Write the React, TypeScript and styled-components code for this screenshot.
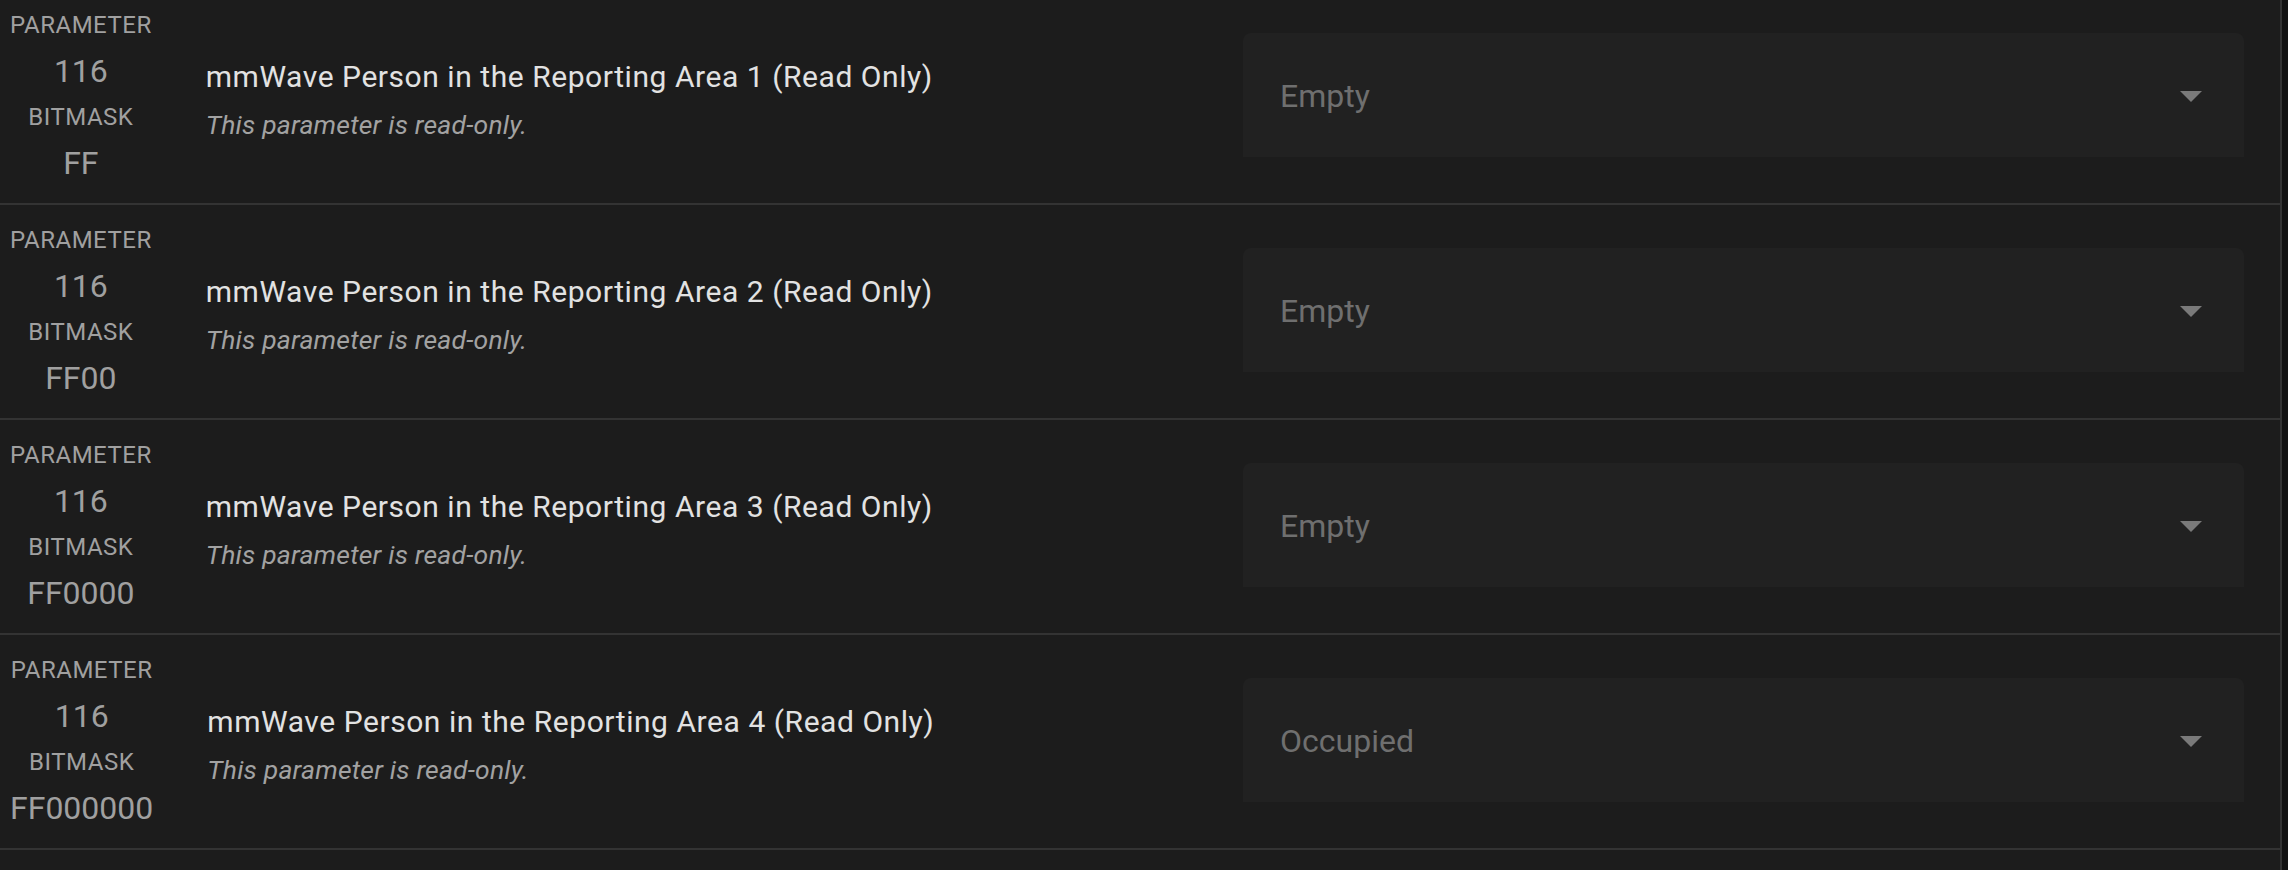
import React from "react";
import styled, { createGlobalStyle } from "styled-components";

const GlobalStyle = createGlobalStyle`
  html, body {
    margin: 0;
    padding: 0;
    background: #121212;
  }
  body {
    font-family: Roboto, "Liberation Sans", Arial, sans-serif;
    overflow: hidden;
  }
`;

const Viewport = styled.div`
  height: 870px;
  overflow: hidden;
`;

const Panel = styled.div`
  box-sizing: border-box;
  width: 2282px;
  min-height: 900px;
  margin-top: -10px;
  background: #1c1c1c;
  border-right: 2px solid #333333;
`;

const Row = styled.div`
  display: flex;
  align-items: center;
  min-height: 213px;
  border-bottom: 2px solid #333333;
`;

const IdColumn = styled.div`
  display: flex;
  flex-direction: column;
  align-items: center;
  padding-left: 10px;
  color: #a0a0a0;
  text-align: center;
`;

const Caption = styled.div`
  font-size: 24px;
  line-height: 40px;
  text-transform: uppercase;
  letter-spacing: 0.5px;
`;

const Value = styled.div`
  font-size: 32px;
  line-height: 52px;
`;

const Info = styled.div`
  flex: 1;
  margin-left: 54px;
  padding-top: 8px;
  min-width: 0;
`;

const Title = styled.div`
  font-size: 30px;
  line-height: 42px;
  letter-spacing: 0.55px;
  color: #e2e2e2;
`;

const Hint = styled.div`
  margin-top: 7px;
  font-size: 26.5px;
  line-height: 40px;
  letter-spacing: 0.2px;
  font-style: italic;
  color: #a2a2a2;
`;

const SelectBox = styled.div`
  box-sizing: border-box;
  width: 1001px;
  height: 124px;
  margin-right: 36px;
  margin-bottom: 3px;
  display: flex;
  align-items: center;
  justify-content: space-between;
  padding: 0 42px 0 37px;
  background: #212121;
  border-radius: 8px 8px 0 0;
  cursor: default;
`;

const SelectValue = styled.span`
  font-size: 32px;
  color: #6f6f6f;
  padding-top: 2px;
`;

const Arrow = styled.svg`
  width: 22px;
  height: 11px;
  display: block;
  margin-top: 2px;
`;

type Param = { bitmask: string; area: number; value: string };

const params: Param[] = [
  { bitmask: "FF", area: 1, value: "Empty" },
  { bitmask: "FF00", area: 2, value: "Empty" },
  { bitmask: "FF0000", area: 3, value: "Empty" },
  { bitmask: "FF000000", area: 4, value: "Occupied" },
];

export default function App() {
  return (
    <>
      <GlobalStyle />
      <Viewport>
        <Panel>
          {params.map((p) => (
            <Row key={p.area}>
              <IdColumn>
                <Caption>Parameter</Caption>
                <Value>116</Value>
                <Caption>Bitmask</Caption>
                <Value>{p.bitmask}</Value>
              </IdColumn>
              <Info>
                <Title>mmWave Person in the Reporting Area {p.area} (Read Only)</Title>
                <Hint>This parameter is read-only.</Hint>
              </Info>
              <SelectBox>
                <SelectValue>{p.value}</SelectValue>
                <Arrow viewBox="0 0 22 11">
                  <path d="M0 0 L22 0 L11 11 Z" fill="#7a7a7a" />
                </Arrow>
              </SelectBox>
            </Row>
          ))}
        </Panel>
      </Viewport>
    </>
  );
}
